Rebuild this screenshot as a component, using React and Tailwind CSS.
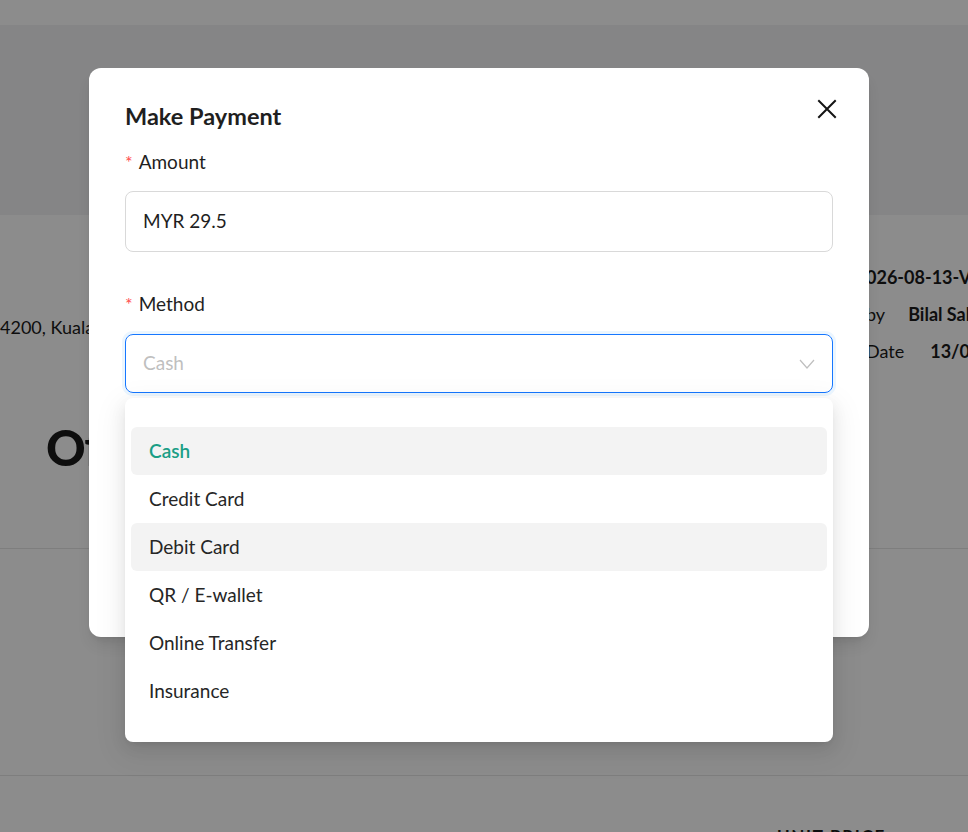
import React from 'react';

const methods = ['Cash', 'Credit Card', 'Debit Card', 'QR / E-wallet', 'Online Transfer', 'Insurance'];

function CloseIcon() {
  return (
    <svg width="20" height="20" viewBox="0 0 20 20" fill="none" stroke="#141414" strokeWidth="2" strokeLinecap="square">
      <path d="M2 2 L18 18 M18 2 L2 18" />
    </svg>
  );
}

function Chevron() {
  return (
    <svg width="16" height="10" viewBox="0 0 16 10" fill="none" stroke="#bfbfbf" strokeWidth="1.2">
      <path d="M1 1 L8 9 L15 1" />
    </svg>
  );
}

export default function App() {
  return (
    <div className="relative h-[832px] w-full overflow-hidden bg-white text-[#1a1a1a]" style={{ fontFamily: 'Lato, "Noto Sans", sans-serif' }}>
      {/* page behind the dialog */}
      <div className="h-[25px]" />
      <div className="h-[190px] bg-[#f2f2f5]" />
      <div className="relative h-[334px] border-b border-[#e6e6e6]">
        <div className="flex justify-between pt-[49px]">
          <div className="pt-[50px] text-[18px] whitespace-nowrap">4200, Kuala Lumpur, Malaysia</div>
          <div className="flex w-[102px] flex-col gap-[10px] overflow-hidden text-[18px] whitespace-nowrap">
            <div className="font-bold">026-08-13-V001</div>
            <div className="flex gap-[23px]">
              <span>by</span>
              <span className="font-bold">Bilal Saleem</span>
            </div>
            <div className="flex gap-[26px]">
              <span>Date</span>
              <span className="font-bold">13/08/2026</span>
            </div>
          </div>
        </div>
        <div className="pl-[46px] pt-[58px] text-[49px] font-black leading-none tracking-tight">Official Receipt</div>
      </div>
      <div className="h-[227px] border-b border-[#e6e6e6]" />
      <div className="flex justify-end pr-[82px] pt-[47px] text-[17px] font-bold tracking-widest">UNIT PRICE</div>

      {/* overlay */}
      <div className="absolute inset-0 bg-black/45" />

      {/* modal */}
      <div className="absolute left-[89px] top-[68px] h-[569px] w-[780px] rounded-xl bg-white px-9 pt-9 shadow-lg">
        <button className="absolute right-[32px] top-[31px] flex h-[20px] w-[20px] items-center justify-center">
          <CloseIcon />
        </button>
        <h2 className="text-[23.5px] font-bold leading-[24px] text-[#1f1f1f]">Make Payment</h2>

        <label className="mt-[20px] flex h-[27px] items-center gap-[6px] text-[19px] leading-[27px] text-[#1f1f1f]">
          <span className="relative top-[1px] text-[18px] text-[#ff4d4f]">*</span>Amount
        </label>
        <div className="mt-[16px] flex h-[61px] items-center rounded-lg border border-[#d9d9d9] px-[17px] text-[19px] text-[#1f1f1f]">
          MYR 29.5
        </div>

        <label className="mt-[38px] flex h-[27px] items-center gap-[6px] text-[19px] leading-[27px] text-[#1f1f1f]">
          <span className="relative top-[1px] text-[18px] text-[#ff4d4f]">*</span>Method
        </label>
        <div className="mt-[17px] flex h-[59px] items-center justify-between rounded-lg border border-[#1677ff] px-[17px] text-[19px] shadow-[0_0_0_3px_rgba(5,145,255,0.08)]">
          <span className="text-[#bfbfbf]">Cash</span>
          <Chevron />
        </div>

        {/* dropdown */}
        <div className="absolute left-9 top-[330px] w-[708px] rounded-lg bg-white px-[6px] pb-[27px] pt-[29px] shadow-[0_6px_16px_0_rgba(0,0,0,0.08),0_3px_6px_-4px_rgba(0,0,0,0.12),0_9px_28px_8px_rgba(0,0,0,0.05)]">
          {methods.map((m) => (
            <div
              key={m}
              className={`flex h-[48px] items-center rounded-md px-[18px] text-[19px] ${
                m === 'Cash' ? 'bg-[#f3f3f3] font-semibold text-[#1a9e86]' : m === 'Debit Card' ? 'bg-[#f3f3f3] text-[#262626]' : 'text-[#262626]'
              }`}
            >
              {m}
            </div>
          ))}
        </div>
      </div>
    </div>
  );
}
